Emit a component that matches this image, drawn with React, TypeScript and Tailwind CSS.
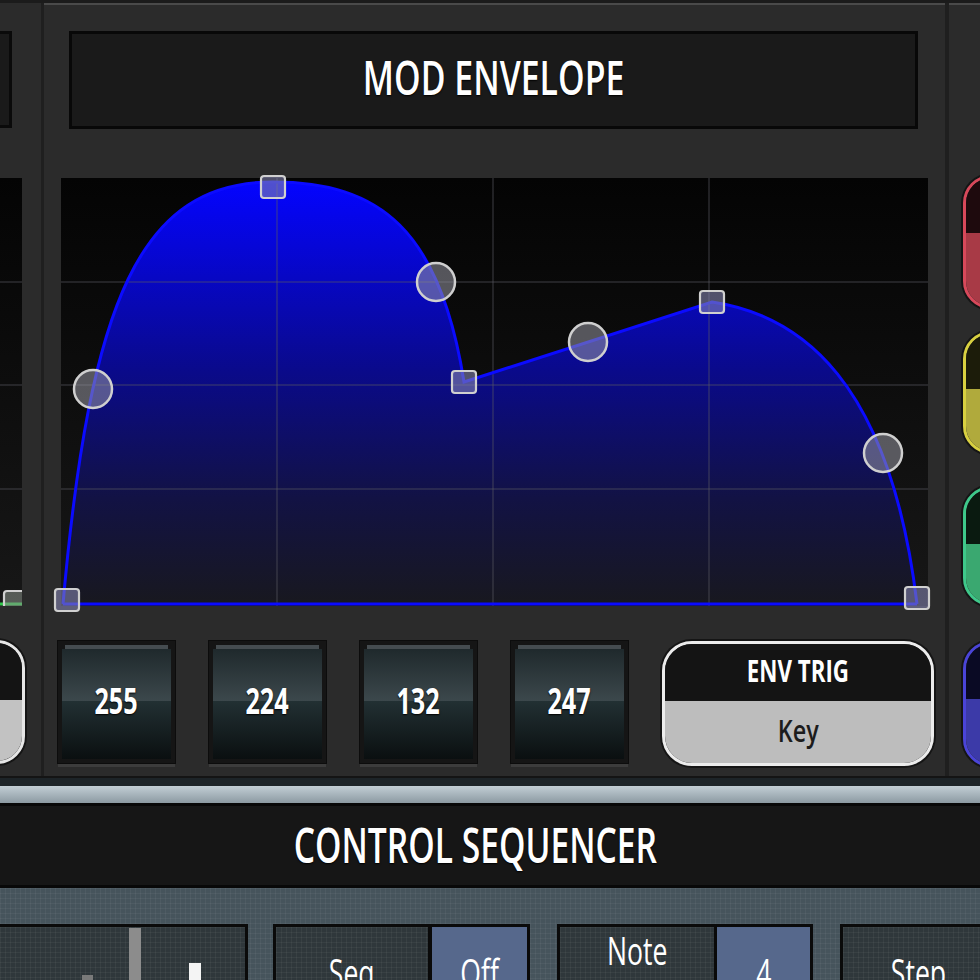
import React from "react";

const txt = "inline-block origin-center whitespace-nowrap";

function ValueBox({ v }: { v: string }) {
  return (
    <div className="flex flex-col w-[117px] shrink-0">
      <div className="h-[122px] bg-[#151515] p-[4px] shadow-[0_0_0_1px_#0c0c0c]">
        <div className="relative h-full flex flex-col">
          <div className="h-[4px] mx-[3px] bg-[#454c50]" />
          <div className="h-[52px] bg-[linear-gradient(#1f292c,#3c484c)]" />
          <div className="flex-1 bg-[linear-gradient(#223033,#0a0f10)]" />
          <div className="absolute inset-0 flex items-center justify-center pb-[3px]">
            <span className={`${txt} scale-x-[0.72] text-[35px] leading-none font-bold text-white [text-shadow:0_1px_2px_#000]`}>
              {v}
            </span>
          </div>
        </div>
      </div>
      <div className="h-[3px] mt-[1px] bg-[#3c3c3c]" />
    </div>
  );
}

function Graph() {
  const curve =
    "M2,426 C29,122 79,4 212,4 C319,4 379,52 403,204 L651,124 C739,137 829,202 856,426 Z";
  const line =
    "M2,426 C29,122 79,4 212,4 C319,4 379,52 403,204 L651,124 C739,137 829,202 856,426";
  const circle = (x: number, y: number) => (
    <circle cx={x} cy={y} r={19} fill="rgba(150,150,160,0.55)" stroke="#cfcfcf" strokeWidth={2.5} />
  );
  const square = (x: number, y: number) => (
    <rect x={x - 12} y={y - 11} width={24} height={22} rx={3} fill="rgba(130,130,175,0.6)" stroke="#d0d0d0" strokeWidth={2.2} />
  );
  return (
    <div className="relative w-[867px] h-[428px] bg-[linear-gradient(#040404,#171717)]">
      <svg className="absolute inset-0 overflow-visible" width={867} height={428} viewBox="0 0 867 428">
        <defs>
          <linearGradient id="envfill" x1="0" y1="4" x2="0" y2="426" gradientUnits="userSpaceOnUse">
            <stop offset="0" stopColor="#0404ff" />
            <stop offset="0.45" stopColor="#0a0a8a" />
            <stop offset="0.75" stopColor="#121244" />
            <stop offset="1" stopColor="#18181f" />
          </linearGradient>
        </defs>
        <path d={curve} fill="url(#envfill)" />
        {[104, 207, 311].map((y) => (
          <line key={y} x1={0} y1={y} x2={867} y2={y} stroke="rgba(90,90,100,0.45)" strokeWidth={1.5} />
        ))}
        {[216, 432, 648].map((x) => (
          <line key={x} x1={x} y1={0} x2={x} y2={428} stroke="rgba(90,90,100,0.45)" strokeWidth={1.5} />
        ))}
        <path d={line} fill="none" stroke="#0b0bff" strokeWidth={3} />
        <line x1={2} y1={426} x2={856} y2={426} stroke="#0b0bff" strokeWidth={3} />
        {square(6, 422)}
        {circle(32, 211)}
        {square(212, 9)}
        {circle(375, 104)}
        {square(403, 204)}
        {circle(527, 164)}
        {square(651, 124)}
        {circle(822, 275)}
        {square(856, 420)}
      </svg>
    </div>
  );
}

function LeftPanel() {
  return (
    <div className="w-[41px] shrink-0 overflow-hidden flex flex-col items-end pt-[28px]">
      <div className="w-[200px] h-[97px] mr-[29px] shrink-0 border-[3px] border-[#0a0a0a] bg-[#1a1a1a]" />
      <div className="relative w-[200px] h-[428px] mt-[50px] mr-[19px] shrink-0 bg-[linear-gradient(#040404,#171717)]">
        <svg className="absolute inset-0" width={200} height={428} viewBox="0 0 200 428">
          {[104, 207, 311].map((y) => (
            <line key={y} x1={0} y1={y} x2={200} y2={y} stroke="rgba(90,90,100,0.45)" strokeWidth={1.5} />
          ))}
          <line x1={0} y1={426} x2={200} y2={426} stroke="#2ec84a" strokeWidth={3} />
          <rect x={182} y={413} width={22} height={20} rx={3} fill="rgba(140,150,140,0.55)" stroke="#d0d0d0" strokeWidth={2.2} />
        </svg>
      </div>
      <div className="w-[200px] h-[124px] mt-[34px] mr-[16px] shrink-0 rounded-[28px] border-[3px] border-[#e6e6e6] overflow-hidden flex flex-col shadow-[0_0_0_2px_#151515]">
        <div className="h-[57px] bg-[#141414]" />
        <div className="flex-1 bg-[#c2c2c2]" />
      </div>
    </div>
  );
}

function ColorPill({ b, t, f, h }: { b: string; t: string; f: string; h: string }) {
  return (
    <div className={`w-[100px] ${h} shrink-0 rounded-[28px] border-[3px] overflow-hidden flex flex-col shadow-[0_0_0_2px_#151515] ${b}`}>
      <div className={`h-[55px] ${t}`} />
      <div className={`flex-1 ${f}`} />
    </div>
  );
}

function RightPanel() {
  return (
    <div className="flex-1 overflow-hidden border-t-2 border-[#4a4a4a] flex flex-col items-start pl-[14px] pt-[170px]">
      <ColorPill h="h-[134px]" b="border-[#d8485a]" t="bg-[#1e0a0d]" f="bg-[#a83a46]" />
      <div className="h-[22px] shrink-0" />
      <ColorPill h="h-[123px]" b="border-[#d8d040]" t="bg-[#1c1c0a]" f="bg-[#b0aa3c]" />
      <div className="h-[32px] shrink-0" />
      <ColorPill h="h-[120px]" b="border-[#3ec88a]" t="bg-[#0a1a10]" f="bg-[#3aa870]" />
      <div className="h-[35px] shrink-0" />
      <ColorPill h="h-[126px]" b="border-[#4a44d8]" t="bg-[#0a0a24]" f="bg-[#3c3aa8]" />
    </div>
  );
}

function MainPanel() {
  return (
    <div className="w-[901px] shrink-0 border-t-2 border-[#4a4a4a] flex flex-col">
      <div className="mt-[26px] ml-[25px] mr-[27px] h-[98px] border-[3px] border-[#080808] bg-[#1a1a1a] flex items-center justify-center pb-[6px]">
        <span className={`${txt} scale-x-[0.72] text-[47px] leading-none font-semibold text-white [text-shadow:0_1px_2px_#000]`}>
          MOD ENVELOPE
        </span>
      </div>
      <div className="mt-[49px] ml-[17px]">
        <Graph />
      </div>
      <div className="mt-[35px] pl-[14px] flex gap-[34px]">
        <ValueBox v="255" />
        <ValueBox v="224" />
        <ValueBox v="132" />
        <ValueBox v="247" />
        <div className="w-[272px] h-[125px] shrink-0 rounded-[30px] border-[3px] border-[#ececec] overflow-hidden flex flex-col shadow-[0_0_0_2px_#151515]">
          <div className="h-[57px] bg-[#141414] flex items-center justify-center pb-[4px]">
            <span className={`${txt} scale-x-[0.72] text-[31px] leading-none font-bold text-white`}>ENV TRIG</span>
          </div>
          <div className="flex-1 bg-[#bdbdbd] flex items-center justify-center pb-[2px]">
            <span className={`${txt} scale-x-[0.78] text-[30px] leading-none font-semibold text-[#1c1c1c]`}>Key</span>
          </div>
        </div>
      </div>
    </div>
  );
}

const tex =
  "bg-[linear-gradient(rgba(255,255,255,0.045)_1px,transparent_1px),linear-gradient(90deg,rgba(255,255,255,0.045)_1px,transparent_1px)] bg-[length:5px_5px]";

function Cell({ children, blue, pt, w }: { children: React.ReactNode; blue?: boolean; pt: string; w: string }) {
  return (
    <div className={`h-full ${w} flex justify-center ${pt} ${blue ? "bg-[#56688c]" : `bg-[#2f373b] ${tex}`}`}>
      <span className={`${txt} scale-x-[0.7] text-[38px] leading-none font-medium text-white`}>{children}</span>
    </div>
  );
}

function Bottom() {
  return (
    <div className="flex-1 flex flex-col">
      <div className="h-[10px] bg-[#1d2428] border-t-2 border-[#141414]" />
      <div className="h-[17px] bg-[linear-gradient(#c2ced5,#8c9aa2)]" />
      <div className="h-[85px] border-y-[3px] border-[#080808] bg-[#161616] flex items-center justify-center pr-[30px] pb-[2px]">
        <span className={`${txt} scale-x-[0.7] text-[48px] leading-none font-semibold text-white [text-shadow:0_1px_2px_#000]`}>
          CONTROL SEQUENCER
        </span>
      </div>
      <div className={`flex-1 bg-[#46545c] ${tex} pt-[36px] flex items-start overflow-hidden`}>
        <div className={`relative -ml-[3px] w-[251px] h-[80px] shrink-0 border-[3px] border-[#0a0a0a] bg-[#2f373b] ${tex}`}>
          <svg className="absolute inset-0" width={245} height={74}>
            <rect x={82} y={48} width={11} height={30} fill="#7a7a7a" />
            <rect x={129} y={1} width={12} height={80} fill="#8c8c8c" />
            <rect x={189} y={36} width={12} height={50} fill="#f4f4f4" />
          </svg>
        </div>
        <div className="ml-[25px] w-[257px] h-[80px] shrink-0 border-[3px] border-[#0a0a0a] bg-[#0a0a0a] flex gap-[4px]">
          <Cell w="w-[152px]" pt="pt-[26px]">Seq</Cell>
          <Cell w="flex-1" pt="pt-[26px]" blue>Off</Cell>
        </div>
        <div className="ml-[27px] w-[256px] h-[80px] shrink-0 border-[3px] border-[#0a0a0a] bg-[#0a0a0a] flex gap-[3px]">
          <Cell w="w-[154px]" pt="pt-[4px]">Note</Cell>
          <Cell w="flex-1" pt="pt-[26px]" blue>4</Cell>
        </div>
        <div className="ml-[27px] w-[200px] h-[80px] shrink-0 border-[3px] border-[#0a0a0a] bg-[#0a0a0a] flex">
          <Cell w="w-[150px]" pt="pt-[26px]">Step</Cell>
        </div>
      </div>
    </div>
  );
}

export default function App() {
  return (
    <div className="w-[980px] h-[980px] overflow-hidden bg-[#2b2b2b] flex flex-col font-['Open_Sans',sans-serif]">
      <div className="h-[3px] shrink-0 bg-[#1b1b1b]" />
      <div className="h-[773px] shrink-0 flex">
        <LeftPanel />
        <div className="w-[3px] shrink-0 bg-[#1f1f1f]" />
        <MainPanel />
        <div className="w-[4px] shrink-0 bg-[#1f1f1f]" />
        <RightPanel />
      </div>
      <Bottom />
    </div>
  );
}
